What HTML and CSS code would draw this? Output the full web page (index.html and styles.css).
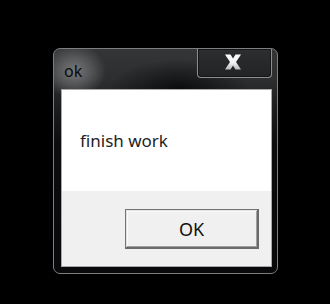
FILE: index.html
```html
<!DOCTYPE html>
<html>
<head>
<meta charset="utf-8">
<link rel="stylesheet" href="styles.css">
</head>
<body>
<div class="screen">
  <div class="window">
    <div class="titlebar">
      <span class="title">ok</span>
      <div class="close">
        <svg class="x-icon" width="18" height="16" viewBox="0 0 18 16">
          <defs>
            <linearGradient id="xg" x1="0" y1="0" x2="0" y2="1">
              <stop offset="0" stop-color="#ffffff"/>
              <stop offset="0.55" stop-color="#f2f2f2"/>
              <stop offset="1" stop-color="#b8b8b8"/>
            </linearGradient>
          </defs>
          <path d="M1 0.5 H6.5 L9 4.5 L11.5 0.5 H17 L12 8 L17 15.5 H11.5 L9 11.5 L6.5 15.5 H1 L6 8 Z" fill="url(#xg)"/>
        </svg>
      </div>
    </div>
    <div class="client">
      <div class="message">finish work</div>
      <div class="footer">
        <button class="ok-btn">OK</button>
      </div>
    </div>
  </div>
</div>
</body>
</html>
```
FILE: styles.css
```css
html, body {
  margin: 0;
  padding: 0;
}
body {
  background: #000;
  width: 330px;
  height: 304px;
  overflow: hidden;
  font-family: "Noto Sans", "Open Sans", sans-serif;
}
.screen {
  padding: 48px 0 0 53px;
}
.window {
  width: 225px;
  height: 226px;
  box-sizing: border-box;
  border: 1px solid #7c7e80;
  border-radius: 7px;
  background:
    radial-gradient(ellipse 32px 27px at 20px 22px, rgba(122,124,126,0.95), rgba(100,102,104,0.65) 55%, rgba(60,62,64,0) 100%),
    radial-gradient(ellipse 70px 30px at 125px 40px, rgba(0,0,0,0.7), rgba(0,0,0,0) 100%),
    linear-gradient(#333537 0px, #2c2e30 30px, #1d1e20 55px, #0c0c0e 95px, #09090b 100%);
  display: flex;
  flex-direction: column;
  padding: 0 5px 6px 7px;
}
.titlebar {
  height: 40px;
  display: flex;
  justify-content: space-between;
  align-items: flex-start;
}
.title {
  color: #0a0a0a;
  font-size: 16px;
  line-height: 16px;
  margin: 14px 0 0 3px;
}
.close {
  width: 75px;
  height: 29px;
  box-sizing: border-box;
  border: 1px solid #8c8e90;
  border-top: none;
  border-radius: 0 0 4px 4px;
  box-shadow: inset 0 0 0 1px #141516;
  background: linear-gradient(#2c2e30, #222325);
  display: flex;
  align-items: center;
  justify-content: center;
}
.x-icon {
  display: block;
  margin: 0 3px 2px 0;
}
.client {
  flex: 1;
  border: 1px solid #a8a8a8;
  display: flex;
  flex-direction: column;
}
.message {
  background: #fff;
  height: 101px;
  box-sizing: border-box;
  padding: 41px 0 0 18px;
  font-size: 17px;
  line-height: 20px;
  color: #1e1e1e;
}
.footer {
  flex: 1;
  background: #f0f0f0;
  display: flex;
  justify-content: flex-end;
  align-items: flex-start;
  padding: 18px 12px 0 0;
}
.ok-btn {
  width: 134px;
  height: 40px;
  box-sizing: border-box;
  border: 1px solid #757575;
  border-right-width: 2px;
  border-bottom-width: 2px;
  border-right-color: #6a6a6a;
  border-bottom-color: #6a6a6a;
  box-shadow: inset 1px 1px 0 #e2e2e2, inset -1px -1px 0 #a0a0a0, inset 2px 2px 0 #fafafa;
  background: #f0f0f0;
  font-family: "Noto Sans", "Open Sans", sans-serif;
  font-size: 18px;
  color: #111;
  padding: 0;
  margin: 0;
}
```
